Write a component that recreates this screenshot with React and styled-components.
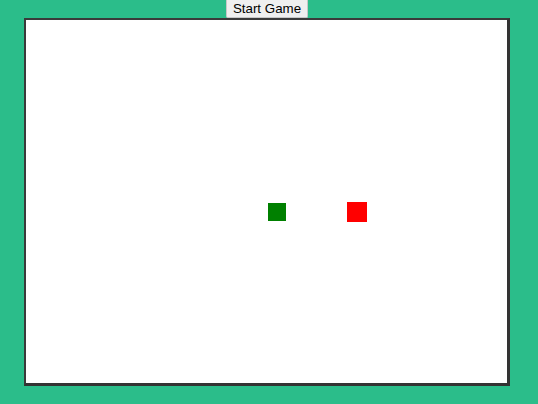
import React from "react";
import styled, { createGlobalStyle } from "styled-components";

const Global = createGlobalStyle`
  html, body {
    margin: 0;
    padding: 0;
    background: #2bbd8a;
    overflow: hidden;
  }
`;

const Page = styled.div`
  width: 534px;
  height: 404px;
  display: flex;
  flex-direction: column;
  align-items: center;
`;

const StartButton = styled.button`
  font-family: "Liberation Sans", Arial, sans-serif;
  font-size: 13.33px;
  height: 18px;
  padding: 0 6px;
  margin: 0;
  line-height: 16px;
  color: #000;
  background: #efefef;
  border: 1px solid #c8c8c8;
  border-top: none;
  border-radius: 0 0 2px 2px;
  cursor: pointer;
`;

const Board = styled.div`
  position: relative;
  width: 481px;
  height: 363px;
  background: #fff;
  border-style: solid;
  border-width: 2px 3px 3px 2px;
  border-color: #3a3a3a #333 #333 #3a3a3a;
`;

const Cell = styled.div`
  position: absolute;
  width: ${(p) => p.size}px;
  height: ${(p) => p.size}px;
  background: ${(p) => p.color};
`;

export default function App() {
  const snake = { x: 242, y: 183, size: 18, color: "#008000" };
  const food = { x: 321, y: 182, size: 20, color: "#ff0000" };
  return (
    <>
      <Global />
      <Page>
        <StartButton>Start Game</StartButton>
        <Board>
          <Cell size={snake.size} color={snake.color} style={{ left: snake.x, top: snake.y }} />
          <Cell size={food.size} color={food.color} style={{ left: food.x, top: food.y }} />
        </Board>
      </Page>
    </>
  );
}
